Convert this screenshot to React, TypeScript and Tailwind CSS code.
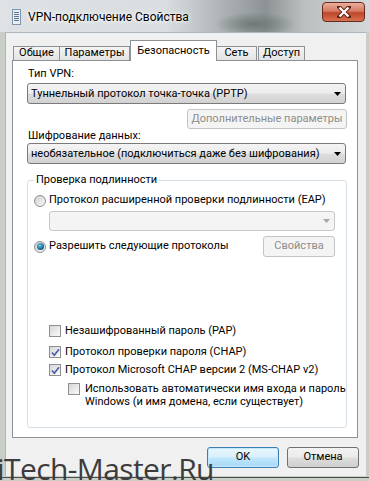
import React from "react";

const font = "font-['Roboto','Liberation_Sans',sans-serif]";

function Combo({ text, disabled, className }: { text?: string; disabled?: boolean; className?: string }) {
  return (
    <div
      className={
        "flex items-center rounded-[3px] border " +
        (disabled
          ? "border-[#c5c8cb] bg-[#f4f4f4] "
          : "border-[#7a7a7a] bg-[linear-gradient(180deg,#f4f4f4_0%,#ececec_48%,#dddddd_52%,#d2d2d2_100%)] ") +
        (className || "")
      }
    >
      <span className="flex-1 pl-[3px] leading-[14px] whitespace-nowrap">{text}</span>
      <svg width="7" height="4" viewBox="0 0 7 4" className="mr-[4px]">
        <polygon points="0,0 7,0 3.5,4" fill={disabled ? "#a6a6a6" : "#000"} />
      </svg>
    </div>
  );
}

function DisabledButton({ text, className }: { text: string; className?: string }) {
  return (
    <div
      className={
        "flex items-center justify-center rounded-[3px] border border-[#c2c5c8] bg-[#f4f4f4] text-[#8d8d8d] whitespace-nowrap " +
        (className || "")
      }
    >
      {text}
    </div>
  );
}

function Radio({ checked }: { checked?: boolean }) {
  return (
    <div className="flex h-[12px] w-[12px] shrink-0 items-center justify-center rounded-full border border-[#8e8f8f] bg-[linear-gradient(135deg,#d0d0d0,#f8f8f8)]">
      {checked && (
        <div className="h-[7px] w-[7px] rounded-full bg-[radial-gradient(circle_at_40%_35%,#6fd0f0,#1a6f98_55%,#0b3d5a)]" />
      )}
    </div>
  );
}

function Check({ checked }: { checked?: boolean }) {
  return (
    <div className="flex h-[12px] w-[12px] shrink-0 items-center justify-center border border-[#8e8f8f] bg-white">
      <div className="flex h-[10px] w-[10px] items-center justify-center bg-[linear-gradient(135deg,#d6d6d6,#fbfbfb)]">
        {checked && (
          <svg width="9" height="9" viewBox="0 0 9 9">
            <path d="M1 4.5 L3.3 7.2 L8 1.2" stroke="#4a5fa8" strokeWidth="1.7" fill="none" />
          </svg>
        )}
      </div>
    </div>
  );
}

export default function App() {
  return (
    <div
      className={
        "relative h-[481px] w-[369px] overflow-hidden bg-[#c9cfc8] text-[11px] text-black " + font
      }
    >
      {/* title bar */}
      <div className="relative flex h-[32px] items-center bg-[linear-gradient(90deg,#dfe2e4_0%,#d9dde0_45%,#a9afb0_62%,#8d9394_72%,#b9bfbf_82%,#d3d8da_100%)]">
        <div className="absolute inset-0 bg-[radial-gradient(ellipse_40px_12px_at_255px_24px,#6f7777,transparent)]" />
        <svg width="9" height="16" viewBox="0 0 9 16" className="relative ml-[12px] mt-[2px]">
          <rect x="0.5" y="0.5" width="8" height="15" fill="#e8eef4" stroke="#7f95ab" />
          <rect x="2" y="3" width="5" height="1" fill="#5b7490" />
          <rect x="2" y="5" width="5" height="1" fill="#5b7490" />
          <rect x="2" y="7" width="5" height="1" fill="#5b7490" />
          <rect x="2" y="9" width="5" height="1" fill="#5b7490" />
          <rect x="2" y="11" width="5" height="1" fill="#5b7490" />
        </svg>
        <span className="relative ml-[7px] mt-[2px] text-[12px] text-black [text-shadow:0_0_6px_#fff,0_0_3px_#fff]">
          VPN-подключение Свойства
        </span>
        <div className="absolute right-[4px] top-[2px] flex h-[20px] w-[43px] items-center justify-center rounded-[4px] border border-[#6b2a1e] bg-[linear-gradient(180deg,#ecae9d_0%,#d77a62_45%,#c0452b_55%,#d8734f_100%)]">
          <svg width="14" height="12" viewBox="0 0 14 12">
            <path d="M2 1 L12 11 M12 1 L2 11" stroke="#5a2318" strokeWidth="4" strokeLinecap="square" />
            <path d="M2.5 1.5 L11.5 10.5 M11.5 1.5 L2.5 10.5" stroke="#fff" strokeWidth="2.2" />
          </svg>
        </div>
      </div>

      {/* client area */}
      <div className="ml-[5px] mr-[3px] flex h-[444px] flex-col border-l border-t border-[#aeb6bd] bg-[#f0f0f0] pl-[6px] pr-[7px] pt-[7px]">
        {/* tabs */}
        <div className="flex h-[20px] items-end pl-[1px]">
          {[
            ["Общие", "w-[47px]"],
            ["Параметры", "w-[71px]"],
          ].map(([t, w]) => (
            <div
              key={t}
              className={
                "-mr-[1px] flex h-[14px] items-center justify-center border border-b-0 border-[#8d9297] bg-[linear-gradient(180deg,#f4f4f4,#e3e3e3)] " +
                w
              }
            >
              {t}
            </div>
          ))}
          <div className="relative z-10 -mb-[1px] ml-[1px] flex h-[21px] w-[87px] items-start justify-center border border-b-0 border-[#8d9297] bg-white pt-[2px]">
            Безопасность
          </div>
          <div className="-ml-[1px] flex h-[14px] w-[41px] items-center justify-center border border-b-0 border-[#8d9297] bg-[linear-gradient(180deg,#f4f4f4,#e3e3e3)]">
            Сеть
          </div>
          <div className="ml-[1px] flex h-[14px] w-[47px] items-center justify-center border border-b-0 border-[#8d9297] bg-[linear-gradient(180deg,#f4f4f4,#e3e3e3)]">
            Доступ
          </div>
        </div>

        {/* tab panel */}
        <div className="flex h-[378px] w-[346px] flex-col border border-[#8d9297] bg-white">
          <div className="mt-[6px] h-[14px] pl-[15px] leading-[14px]">Тип VPN:</div>
          <Combo text="Туннельный протокол точка-точка (PPTP)" className="ml-[14px] mt-[2px] h-[21px] w-[319px]" />
          <DisabledButton text="Дополнительные параметры" className="ml-[174px] mt-[5px] h-[20px] w-[160px]" />
          <div className="h-[14px] pl-[15px] leading-[14px]">Шифрование данных:</div>
          <Combo
            text="необязательное (подключиться даже без шифрования)"
            className="ml-[14px] mt-0 h-[21px] w-[319px]"
          />

          <fieldset className="ml-[14px] mt-[9px] h-[255px] w-[320px] rounded-[3px] border border-[#d5dfe5]">
            <legend className="ml-[6px] h-[14px] px-[2px] leading-[14px]">Проверка подлинности</legend>
            <div className="flex flex-col">
              <div className="mt-[7px] flex h-[13px] items-center pl-[6px]">
                <Radio />
                <span className="ml-[3px] whitespace-nowrap">
                  Протокол расширенной проверки подлинности (EAP)
                </span>
              </div>
              <Combo disabled className="ml-[21px] mt-[4px] h-[20px] w-[286px]" />
              <div className="mt-[5px] flex h-[21px] items-center pl-[6px] pr-[11px]">
                <Radio checked />
                <span className="ml-[3px] whitespace-nowrap">Разрешить следующие протоколы</span>
                <DisabledButton text="Свойства" className="ml-auto h-[21px] w-[72px]" />
              </div>

              <div className="mt-[67px] flex h-[14px] items-center pl-[21px]">
                <Check />
                <span className="ml-[4px] whitespace-nowrap">Незашифрованный пароль (PAP)</span>
              </div>
              <div className="mt-[7px] flex h-[14px] items-center pl-[21px]">
                <Check checked />
                <span className="ml-[4px] whitespace-nowrap">Протокол проверки пароля (CHAP)</span>
              </div>
              <div className="mt-[4px] flex h-[14px] items-center pl-[21px]">
                <Check checked />
                <span className="ml-[4px] whitespace-nowrap">Протокол Microsoft CHAP версии 2 (MS-CHAP v2)</span>
              </div>
              <div className="mt-[5px] flex items-start pl-[40px]">
                <div className="mt-[1px]">
                  <Check />
                </div>
                <span className="ml-[5px] whitespace-nowrap leading-[13px]">
                  Использовать автоматически имя входа и пароль
                  <br />
                  Windows (и имя домена, если существует)
                </span>
              </div>
            </div>
          </fieldset>
        </div>

        {/* buttons */}
        <div className="mt-[9px] flex justify-end gap-[8px]">
          <div className="flex h-[21px] w-[72px] items-center justify-center rounded-[3px] border border-[#3c7fb1] bg-[linear-gradient(180deg,#eaf6fd_0%,#d9f0fc_48%,#bee6fd_52%,#a7d9f5_100%)] shadow-[inset_0_0_0_1px_#c4e7fb]">
            OK
          </div>
          <div className="flex h-[21px] w-[72px] items-center justify-center rounded-[3px] border border-[#707070] bg-[linear-gradient(180deg,#f2f2f2_0%,#ebebeb_48%,#dddddd_52%,#cfcfcf_100%)]">
            Отмена
          </div>
        </div>
      </div>

      {/* bottom frame line */}
      <div className="absolute bottom-[3px] left-0 right-0 h-[1px] bg-[#4a4f4a]" />

      {/* watermark */}
      <div className="absolute -left-[3px] bottom-0 h-[24px] font-['Open_Sans',sans-serif] text-[30px] leading-[24px] tracking-[-0.6px] text-[#3c3c3c]">
        iTech-Master.Ru
      </div>
    </div>
  );
}
